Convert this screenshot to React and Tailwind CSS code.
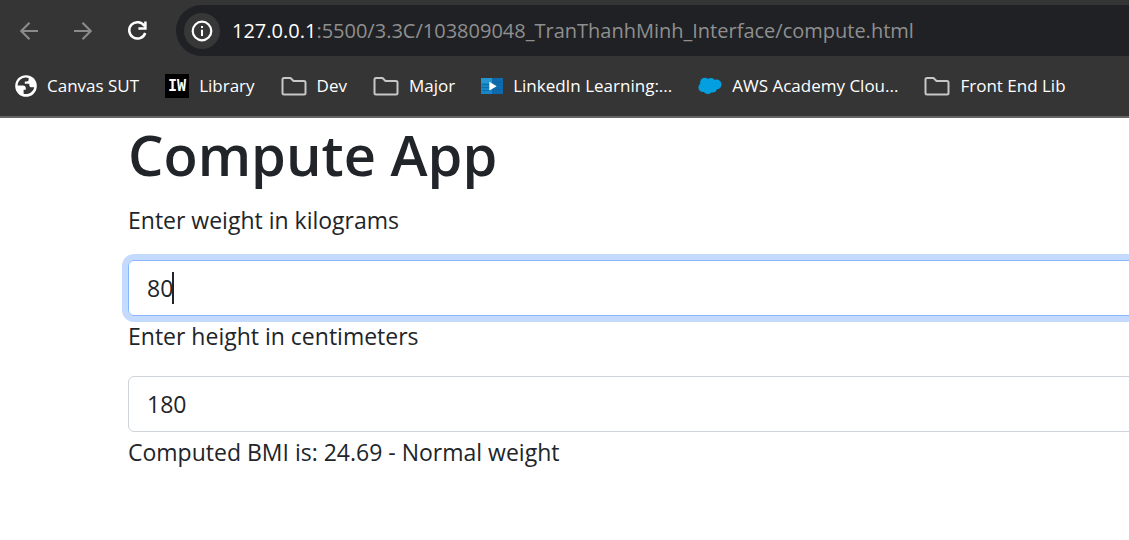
import { useState } from "react";

function ArrowIcon({ flip }) {
  return (
    <svg viewBox="0 0 24 24" className={flip ? "size-6 rotate-180" : "size-6"} fill="none" stroke="currentColor" strokeWidth="2.2" aria-hidden="true">
      <path d="M21 12H4.5M12.5 3.8L4.3 12l8.2 8.2" />
    </svg>
  );
}

function ReloadIcon() {
  return (
    <svg viewBox="0 0 24 24" className="size-6" fill="none" stroke="currentColor" strokeWidth="2.5" aria-hidden="true">
      <path d="M19.5 7.2A8.2 8.2 0 1 0 20.2 14" />
      <path d="M20.4 2.6V9.4H13.4" />
    </svg>
  );
}

function InfoIcon() {
  return (
    <svg viewBox="0 0 22 22" className="size-[22px]" aria-hidden="true">
      <circle cx="11" cy="11" r="9.3" fill="none" stroke="currentColor" strokeWidth="2.2" />
      <path d="M10 9.8h2V16h-2zM10 6h2v2h-2z" fill="currentColor" />
    </svg>
  );
}

function GlobeIcon() {
  return (
    <svg viewBox="0 0 22 22" className="size-[22px] shrink-0" aria-hidden="true">
      <circle cx="11" cy="11" r="10.8" fill="#fff" />
      <path d="M7.5 3.2C4.4 4.6 2.6 7.4 2.6 10.6H8c1.7 0 2.8 1.1 2.8 2.6v1.500H8.600v4c.8.3 1.500.4 2.400.4 4 0 7.500-2.900 8.200-6.800h-2.600c-1.300 0-2.300-.9-2.300-2.300V8.700H9.800V6.500h2.100c1 0 1.700-.7 1.700-1.700V3.100a8.600 8.600 0 0 0-6.100.1z" fill="#353535" />
      <path d="M3 12.400l4.600 4.300v1.400A8.600 8.600 0 0 1 3 12.400z" fill="#fff" />
    </svg>
  );
}

function IwIcon() {
  return (
    <span className="flex size-6 shrink-0 items-center justify-center bg-black font-['DejaVu_Sans_Mono',monospace] text-[15px] leading-none font-bold text-white" aria-hidden="true">
      IW
    </span>
  );
}

function FolderIcon() {
  return (
    <svg viewBox="0 0 26 20" className="h-5 w-[26px] shrink-0" fill="none" stroke="#c7c7c7" strokeWidth="2" strokeLinejoin="round" aria-hidden="true">
      <path d="M3 2h6.500l3 3H23a1.500 1.500 0 0 1 1.500 1.500V17a1.500 1.500 0 0 1-1.500 1.500H3A1.500 1.500 0 0 1 1.500 17V3.500A1.500 1.500 0 0 1 3 2z" />
    </svg>
  );
}

function VideoIcon() {
  return (
    <svg viewBox="0 0 22 16" className="h-4 w-[22px] shrink-0" aria-hidden="true">
      <path d="M0 0h22v16H0z" fill="#1686c4" />
      <path d="M11 0h11v16H11z" fill="#0f69ad" />
      <path d="M0 0h11v5H0z" fill="#2597d0" />
      <path d="M1 6.500h8M1 9.500h8M1 12.500h8M15 4.500h6M15 11.500h6" stroke="#0c5f9e" strokeOpacity="0.6" />
      <path d="M8.300 3.800l7.400 4.400-7.400 4.300z" fill="#fff" />
    </svg>
  );
}

function CloudIcon() {
  return (
    <svg viewBox="0 0 24 18" className="h-[18px] w-6 shrink-0" fill="#049fdf" aria-hidden="true">
      <circle cx="6.800" cy="5.500" r="4.700" />
      <circle cx="12.900" cy="5" r="4" />
      <circle cx="18.500" cy="7.500" r="5" />
      <circle cx="5" cy="10.500" r="4.600" />
      <circle cx="9.800" cy="12.500" r="4.600" />
      <circle cx="14.500" cy="11" r="4.600" />
    </svg>
  );
}

const bookmarks = [
  { label: "Canvas SUT", Icon: GlobeIcon },
  { label: "Library", Icon: IwIcon },
  { label: "Dev", Icon: FolderIcon },
  { label: "Major", Icon: FolderIcon },
  { label: "LinkedIn Learning:...", Icon: VideoIcon },
  { label: "AWS Academy Clou...", Icon: CloudIcon },
  { label: "Front End Lib", Icon: FolderIcon },
];

function BrowserBar() {
  return (
    <header className="border-b-2 border-[#666465] bg-[#353535] text-white">
      <div className="flex items-center pt-[5px] pl-[17px]">
        <nav className="flex items-center gap-[30px]" aria-label="Browser">
          <button type="button" aria-label="Back" className="text-[#8a8a8a]"><ArrowIcon /></button>
          <button type="button" aria-label="Forward" className="text-[#8a8a8a]"><ArrowIcon flip /></button>
          <button type="button" aria-label="Reload"><ReloadIcon /></button>
        </nav>
        <div className="ml-[27px] flex h-[51px] min-w-0 flex-1 items-center gap-3 rounded-l-full bg-[#202124] pl-2">
          <button type="button" aria-label="Site information" className="flex size-9 shrink-0 items-center justify-center rounded-full bg-[#373737]">
            <InfoIcon />
          </button>
          <p className="truncate text-[20px] text-[#8f8f8f]">
            <span className="text-white">127.0.0.1</span>:5500/3.3C/103809048_TranThanhMinh_Interface/compute.html
          </p>
        </div>
      </div>
      <nav className="flex h-[60px] items-center gap-[26px] overflow-hidden pl-[15px]" aria-label="Bookmarks">
        {bookmarks.map(({ label, Icon }) => (
          <a key={label} href="#" className="flex shrink-0 items-center gap-[10px] text-[17px] whitespace-nowrap">
            <Icon />
            {label}
          </a>
        ))}
      </nav>
    </header>
  );
}

function NumberField({ id, label, value, onChange, active }) {
  return (
    <div>
      <label htmlFor={id} className="mb-[22px] block leading-9">{label}</label>
      <div className="relative">
        <input
          id={id}
          type="text"
          inputMode="numeric"
          value={value}
          onChange={(e) => onChange(e.target.value)}
          className={
            active
              ? "block h-14 w-full rounded-md border border-[#86b7fe] px-[18px] caret-transparent ring-6 ring-[#c4dbff] outline-none"
              : "block h-14 w-full rounded-md border border-[#ced4da] px-[18px] outline-none"
          }
        />
        {active && (
          <span className="pointer-events-none absolute top-3 left-[18px] flex" aria-hidden="true">
            <span className="invisible">{value}</span>
            <span className="h-8 w-[2px] bg-[#212529]" />
          </span>
        )}
      </div>
    </div>
  );
}

function category(bmi) {
  if (bmi < 18.5) return "Underweight";
  if (bmi < 25) return "Normal weight";
  if (bmi < 30) return "Overweight";
  return "Obese";
}

export default function App() {
  const [weight, setWeight] = useState("80");
  const [height, setHeight] = useState("180");
  const bmi = Number(weight) / (Number(height) / 100) ** 2;

  return (
    <div className="min-h-screen overflow-hidden bg-white font-['Open_Sans','Noto_Sans',sans-serif]">
      <BrowserBar />
      <main className="-mr-4 pl-32 text-[23px] text-[#212529]">
        <h1 className="mb-3 text-[56px] leading-[72px] font-semibold">Compute App</h1>
        <div className="flex flex-col gap-[2px]">
          <NumberField id="weight" label="Enter weight in kilograms" value={weight} onChange={setWeight} active />
          <NumberField id="height" label="Enter height in centimeters" value={height} onChange={setHeight} />
          <p className="leading-9">
            Computed BMI is: {bmi.toFixed(2)} - {category(bmi)}
          </p>
        </div>
      </main>
    </div>
  );
}
